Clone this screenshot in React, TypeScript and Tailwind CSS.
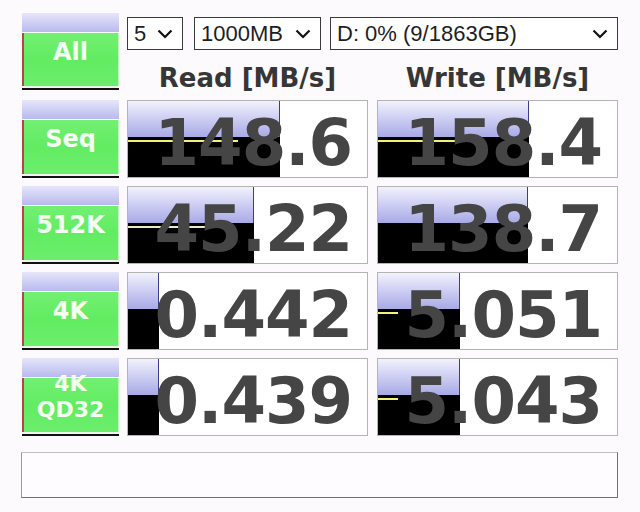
import React from "react";

type Row = {
  label: string[];
  read: string;
  readBar: number;
  readLine: number;
  write: string;
  writeBar: number;
  writeLine: number;
};

const ROWS: Row[] = [
  { label: ["Seq"], read: "148.6", readBar: 152, readLine: 110, write: "158.4", writeBar: 151, writeLine: 80 },
  { label: ["512K"], read: "45.22", readBar: 126, readLine: 90, write: "138.7", writeBar: 150, writeLine: 0 },
  { label: ["4K"], read: "0.442", readBar: 31, readLine: 0, write: "5.051", writeBar: 82, writeLine: 20 },
  { label: ["4K", "QD32"], read: "0.439", readBar: 31, readLine: 0, write: "5.043", writeBar: 82, writeLine: 20 },
];

const DEJAVU = "font-['DejaVu_Sans',Verdana,sans-serif] font-bold";

function Chevron() {
  return (
    <svg width="16" height="10" viewBox="0 0 16 10" className="shrink-0">
      <path d="M1.5 1.5 L8 8 L14.5 1.5" fill="none" stroke="#111" strokeWidth="2.2" />
    </svg>
  );
}

function Select({ text, width }: { text: string; width: string }) {
  return (
    <div className={`${width} h-[33px] flex items-center justify-between pl-[6px] pr-[9px] bg-white border border-[#3a3a3a]`}>
      <span className="text-[22px] leading-[26px] text-[#1e1e1e] font-['Liberation_Sans',Arial,sans-serif]">{text}</span>
      <Chevron />
    </div>
  );
}

function LabelButton({ lines, h }: { lines: string[]; h: string }) {
  return (
    <div className={`relative w-[97px] ${h} flex flex-col shrink-0`}>
      {/* lavender cap */}
      <div className="h-[19px] bg-gradient-to-b from-[#e6e6fa] to-[#b9b9ee]" />
      <div className="h-px bg-[#f4fff4]" />
      {/* green body */}
      <div className="flex-1 flex">
        <div className="w-[2px] bg-[#b8444a]" />
        <div className="flex-1 bg-gradient-to-b from-[#72f072] via-[#62ec62] to-[#6cee6c] border-r border-[#b8f8b8]" />
      </div>
      <div className="h-[2px] bg-[#eef6ee]" />
      <div className="h-[2px] bg-[#111]" />
      {/* caption lies over the button face */}
      <div className={`absolute inset-0 flex flex-col items-center justify-center ${DEJAVU} text-[#f2fff2] ${lines.length > 1 ? "text-[22px] leading-[26px]" : "text-[24px] leading-[30px]"}`}>
        {lines.map(l => <span key={l}>{l}</span>)}
      </div>
    </div>
  );
}

function ValueCell({ value, bar, line, lineColor }: { value: string; bar: number; line: number; lineColor: string }) {
  return (
    <div className="relative w-[241px] h-[78px] bg-white border border-[#b4b4b4]">
      {/* bar underneath the number */}
      <div className="absolute left-0 top-0 bottom-0 flex flex-col" style={{ width: bar }}>
        <div className="h-[36px] bg-gradient-to-b from-[#f2f2fd] to-[#a9a9e6] border-r border-[#3c3c8c]" />
        <div className="flex-1 bg-black relative">
          {line > 0 && <div className="absolute left-0 top-[3px] h-[2px]" style={{ width: line, background: lineColor }} />}
        </div>
      </div>
      <div className="relative h-full flex items-center justify-end pr-[15px] pt-[9px]">
        <span className={`${DEJAVU} text-[64px] leading-[75px] text-[#454545] tracking-[-1px] whitespace-nowrap`}>{value}</span>
      </div>
    </div>
  );
}

export default function App() {
  return (
    <div className="w-[640px] h-[512px] bg-[#fcfafc] pl-[22px] pt-[13px] overflow-hidden">
      {/* top row */}
      <div className="flex h-[77px]">
        <LabelButton lines={["All"]} h="h-[77px]" />
        <div className="ml-[8px] flex flex-col">
          <div className="flex gap-[11px] mt-[4px]">
            <Select text="5" width="w-[56px]" />
            <Select text="1000MB" width="w-[127px]" />
            <div className="-ml-[2px]">
              <Select text="D: 0% (9/1863GB)" width="w-[288px]" />
            </div>
          </div>
          <div className={`flex mt-[12px] ${DEJAVU} text-[26px] leading-[32px] text-[#363636]`}>
            <div className="w-[241px] text-center">Read [MB/s]</div>
            <div className="w-[241px] ml-[9px] text-center">Write [MB/s]</div>
          </div>
        </div>
      </div>

      {/* result rows */}
      <div className="mt-[10px] flex flex-col gap-[8px]">
        {ROWS.map(r => (
          <div key={r.read} className="flex">
            <LabelButton lines={r.label} h="h-[78px]" />
            <div className="ml-[8px]">
              <ValueCell value={r.read} bar={r.readBar} line={r.readLine} lineColor={r.label[0] === "Seq" ? "#f4f07a" : "#ece8c4"} />
            </div>
            <div className="ml-[9px]">
              <ValueCell value={r.write} bar={r.writeBar} line={r.writeLine} lineColor="#f4f07a" />
            </div>
          </div>
        ))}
      </div>

      {/* comment box */}
      <div className="-ml-px mt-[16px] w-[597px] h-[46px] bg-[#fefcfe] border border-t-[#c0c0c0] border-l-[#9a9a9a] border-r-[#707070] border-b-[#707070]" />
    </div>
  );
}
